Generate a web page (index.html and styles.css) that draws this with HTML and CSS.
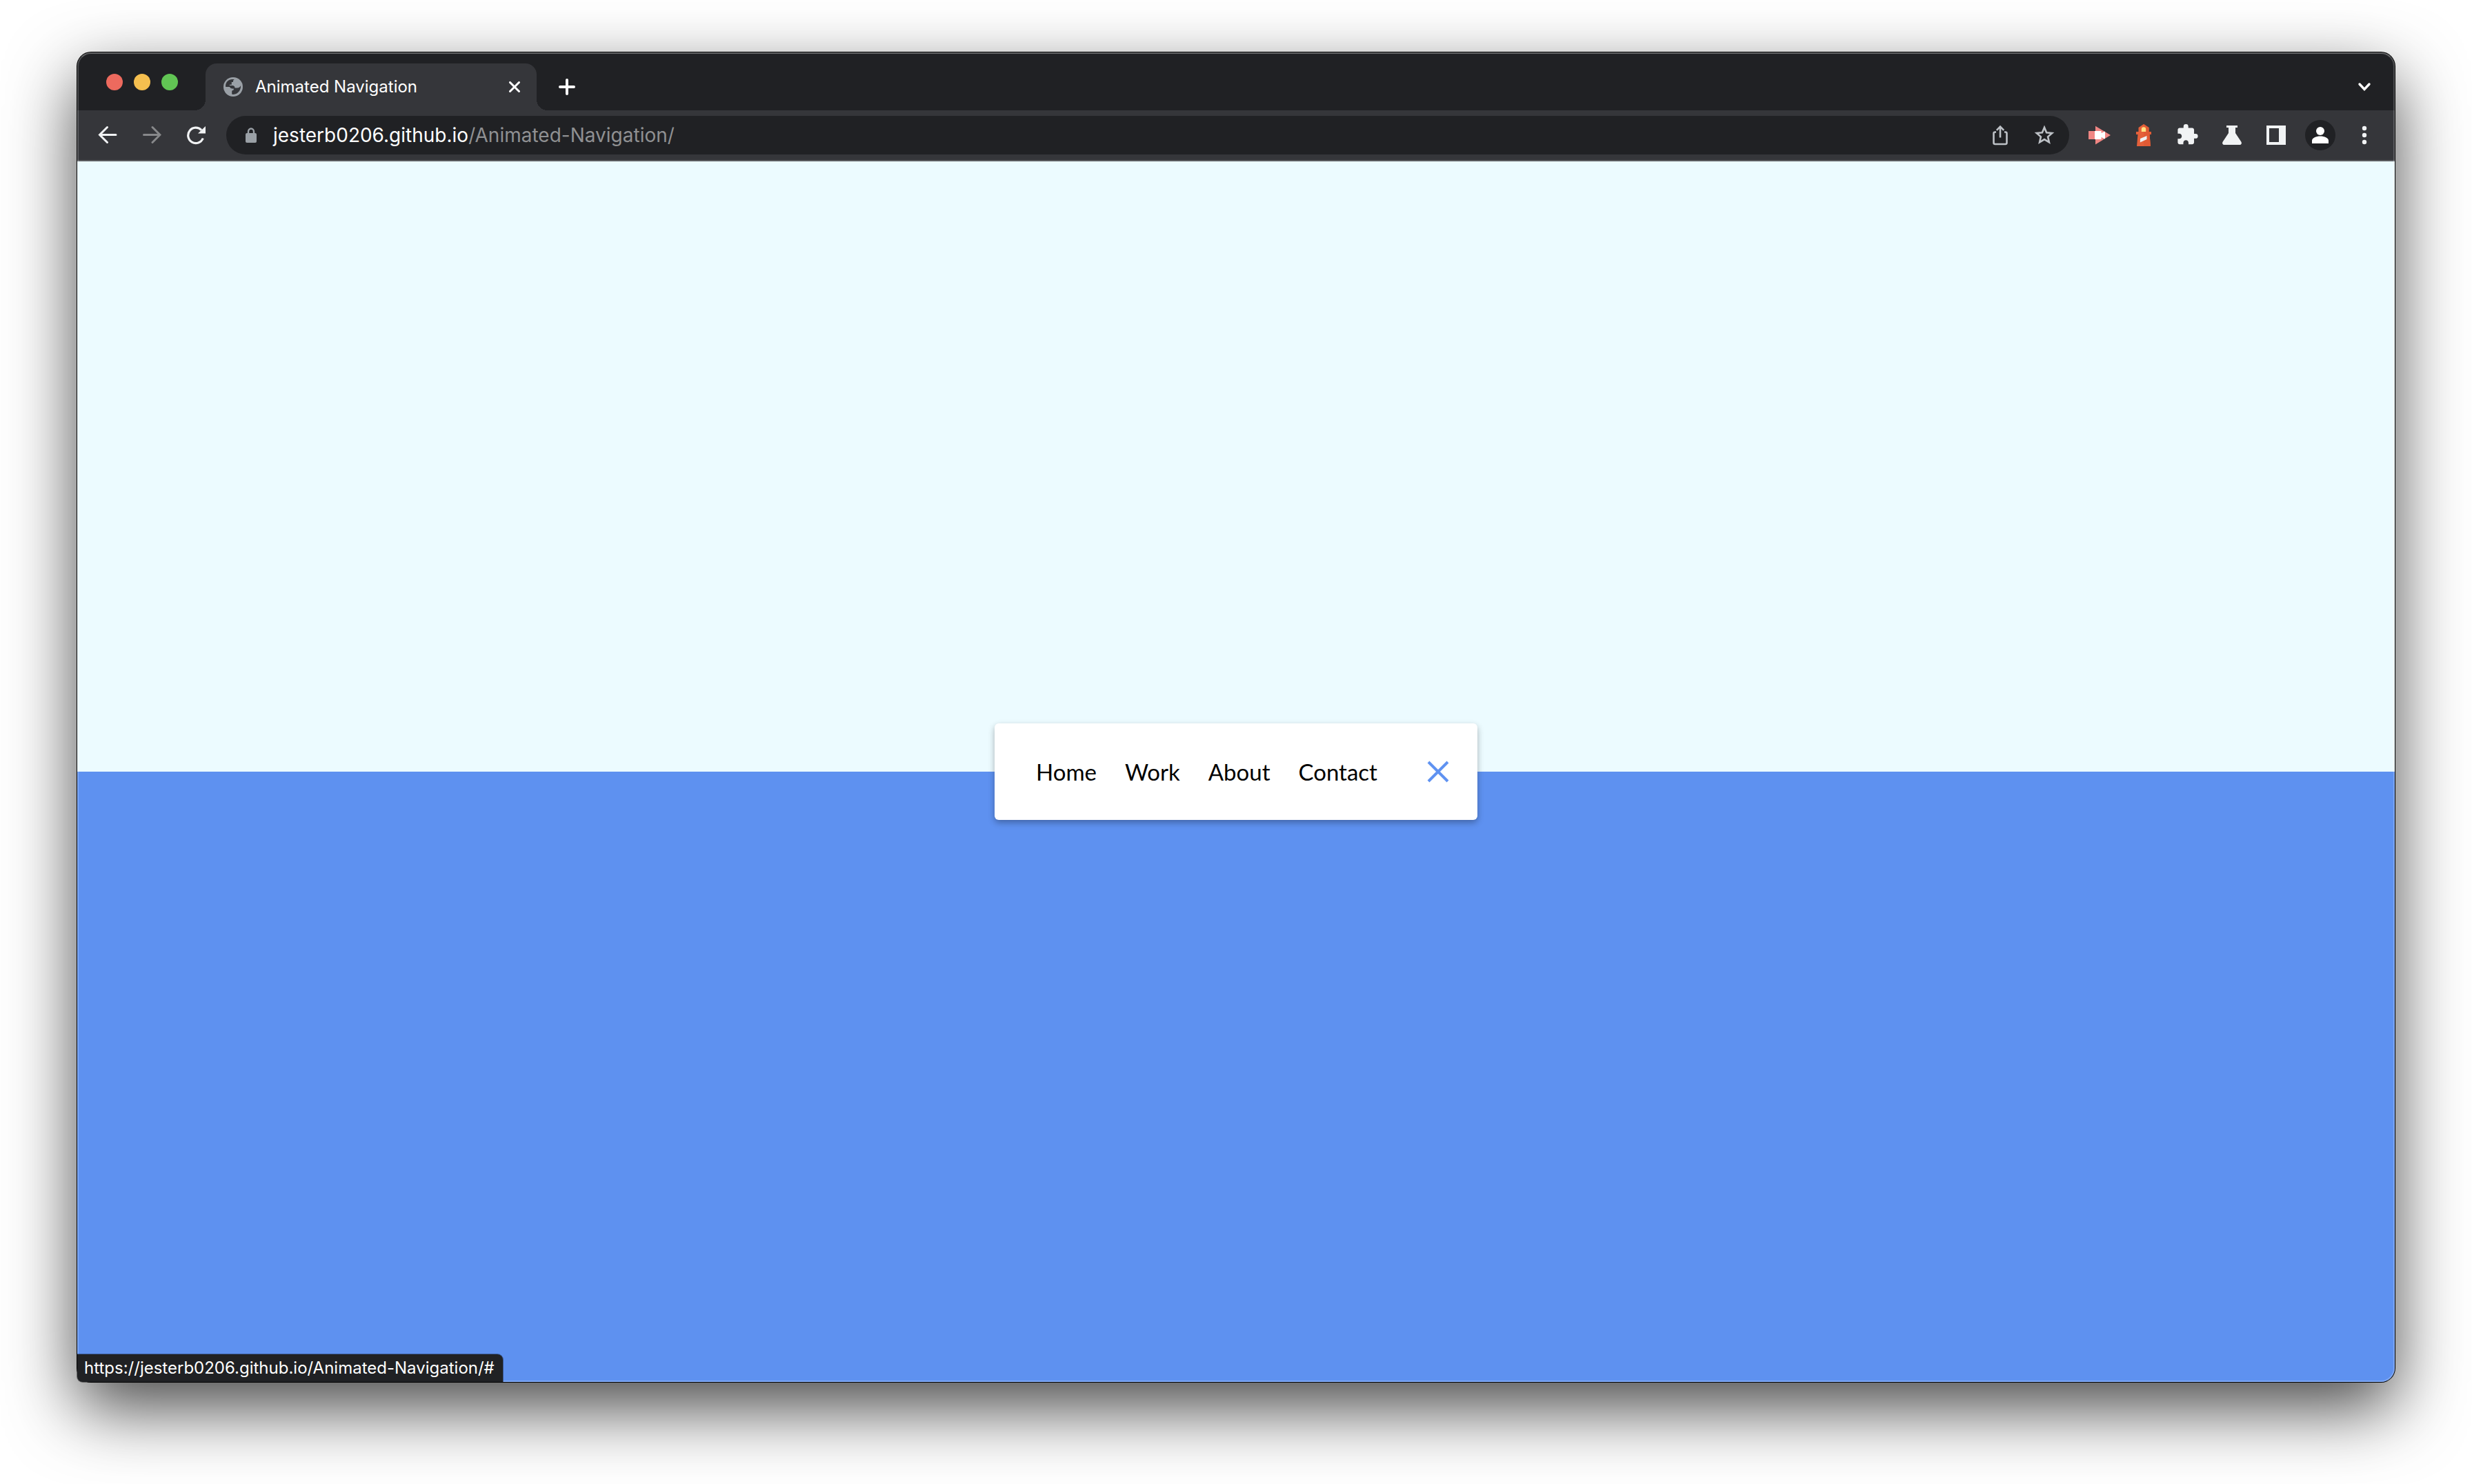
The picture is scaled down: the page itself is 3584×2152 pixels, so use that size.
FILE: index.html
```html
<!DOCTYPE html>
<html lang="en">
<head>
<meta charset="utf-8">
<meta name="viewport" content="width=device-width, initial-scale=1">
<title>Animated Navigation</title>
<link rel="stylesheet" href="styles.css">
</head>
<body>
<div class="window">
  <header class="tabstrip">
    <div class="lights">
      <button class="light light-red" aria-label="Close window"></button>
      <button class="light light-yellow" aria-label="Minimise window"></button>
      <button class="light light-green" aria-label="Zoom window"></button>
    </div>
    <div class="tab">
      <svg class="icon-28" viewBox="0 0 28 28"><circle cx="14" cy="14" r="14" fill="#9aa0a6"/><path d="M16 3.2c-1 .3-2 1-2 2.400v1.500h-2.200v3.700H9.500c-1 0-1 1.200-.2 1.200h3.500c2.500 0 3.700 1.300 3.700 3.400h3.200c2.800 0 4.800-1.500 5.300-3.400.7 5.500-3.500 12.900-11 12.900-.9 0-1.500-.1-1.800-.3V21c0-1.200 1-2.200 2.600-2.400v-2.200h-2.500c-1.700 0-2.700-1-3.200-2.300H3.200c-.8-5.400 2.400-10.100 8.800-11 1.200-.2 2.800-.2 4 .1z" fill="#35363a"/></svg>
      <span class="tab-title">Animated Navigation</span>
      <button class="plain" aria-label="Close tab"><svg class="icon-16" viewBox="0 0 16 16"><path d="M1.500 1.500l13 13M14.500 1.500l-13 13" stroke="#fff" stroke-width="3" stroke-linecap="round"/></svg></button>
    </div>
    <button class="plain new-tab" aria-label="New tab"><svg class="icon-24" viewBox="0 0 24 24"><path d="M12 2v20M2 12h20" stroke="#fff" stroke-width="4" stroke-linecap="round"/></svg></button>
    <button class="plain tool tab-search" aria-label="Search tabs"><svg class="icon-24" viewBox="0 0 24 24"><path d="M5 8l7 7.500L19 8" fill="none" stroke="#fff" stroke-width="3.400" stroke-linecap="round"/></svg></button>
  </header>

  <div class="toolbar">
    <div class="tools">
      <button class="plain tool" aria-label="Back"><svg class="icon-28" viewBox="0 0 28 28"><path d="M26 13.500H3M13.500 2.500l-11 11 11 11" fill="none" stroke="#f1f3f4" stroke-width="3" stroke-linecap="round"/></svg></button>
      <button class="plain tool" aria-label="Forward"><svg class="icon-28" viewBox="0 0 28 28"><path d="M2.500 13.500h23M15 2.500l11 11-11 11" fill="none" stroke="#87888a" stroke-width="3" stroke-linecap="round"/></svg></button>
      <button class="plain tool" aria-label="Reload"><svg class="icon-28" viewBox="0 0 28 28"><path d="M22 6.600A11.200 11.200 0 1 0 24.300 18.500" fill="none" stroke="#f1f3f4" stroke-width="3.200"/><path d="M28 1v10.500H17z" fill="#f1f3f4"/></svg></button>
    </div>
    <div class="omnibox">
      <button class="plain lock" aria-label="Site information"><svg class="icon-24" viewBox="0 0 24 24"><rect x="4" y="9" width="16" height="14" rx="2" fill="#9aa0a6"/><path d="M8 10V7a4 4.500 0 0 1 8 0v3" fill="none" stroke="#9aa0a6" stroke-width="2.400"/></svg></button>
      <div class="address" role="textbox" aria-label="Address">jesterb0206.github.io<span class="path">/Animated-Navigation/</span></div>
      <button class="plain tool" aria-label="Share"><svg class="icon-32" viewBox="0 0 32 32"><path d="M10 11.500H8.500a2 2 0 0 0-2 2V27a2 2 0 0 0 2 2h15a2 2 0 0 0 2-2V13.500a2 2 0 0 0-2-2H22M16 19.500V4M10.800 8.800L16 3.600l5.200 5.200" fill="none" stroke="#bdc1c6" stroke-width="2.600"/></svg></button>
      <button class="plain tool" aria-label="Bookmark"><svg class="icon-32" viewBox="0 0 32 32"><path d="M16 4.800l3.100 7.500 8.100.7-6.100 5.400 1.800 7.900-6.900-4.200-6.900 4.200 1.800-7.900L4.800 13l8.100-.7z" fill="none" stroke="#bdc1c6" stroke-width="2.600"/></svg></button>
    </div>
    <div class="tools">
      <button class="plain tool" aria-label="Screen recorder"><svg class="icon-32" viewBox="0 0 32 32"><path d="M0 10h10v12H0zM10 2.700L32 16 10 29.500z" fill="#f08683"/><path d="M9 10h9.500v3L24 10.500v11L18.500 19v3H9z" fill="#fff"/></svg></button>
      <button class="plain tool" aria-label="Lighthouse"><svg class="icon-32" viewBox="0 0 32 32"><path d="M16 0l7.500 5v6H27v4h-2.500L26 32H6l1.500-17H5v-4h3.500V5z" fill="#e4603a"/><path d="M16 0l7.500 5v6H27v4h-2.500L26 32H16z" fill="#e05a34"/><path d="M12.800 11V7.500a3.200 3.200 0 0 1 6.400 0V11z" fill="#ffe082"/><path d="M11 21l9.500-4v5l-9.700 4.500z" fill="#eef1f2"/></svg></button>
      <button class="plain tool" aria-label="Extensions"><svg class="icon-32" viewBox="1 1 23 23"><path d="M20.500 11H19V7c0-1.100-.9-2-2-2h-4V3.500a2.500 2.500 0 0 0-5 0V5H4c-1.100 0-1.990.9-1.990 2v3.800H3.500c1.490 0 2.700 1.210 2.700 2.700s-1.210 2.700-2.700 2.700H2V20c0 1.100.9 2 2 2h3.800v-1.500c0-1.490 1.210-2.700 2.700-2.700s2.700 1.210 2.700 2.700V22H17c1.100 0 2-.9 2-2v-4h1.500a2.500 2.500 0 0 0 0-5z" fill="#f1f3f4"/></svg></button>
      <button class="plain tool" aria-label="Labs"><svg class="icon-28" viewBox="0 0 28 28"><path d="M6 0h16v3h-3v8l8.300 12.500c1.400 2.200.2 4.500-2.300 4.500H3c-2.500 0-3.700-2.300-2.300-4.500L9 11V3H6z" fill="#f1f3f4"/></svg></button>
      <button class="plain tool" aria-label="Side panel"><svg class="icon-28" viewBox="0 0 28 28"><path d="M0 0h28v28H0zM4 4v20h14V4z" fill="#f1f3f4" fill-rule="evenodd"/></svg></button>
      <button class="plain tool" aria-label="Profile"><svg class="icon-44" viewBox="0 0 44 44"><circle cx="22" cy="22" r="22" fill="#202124"/><circle cx="22" cy="16" r="6" fill="#fff"/><path d="M10 34v-4c0-4 6-6.500 12-6.500S34 26 34 30v4z" fill="#fff"/></svg></button>
      <button class="plain tool" aria-label="Menu"><svg class="icon-28" viewBox="0 0 28 28"><g fill="#f1f3f4"><circle cx="14" cy="4" r="3.200"/><circle cx="14" cy="14" r="3.200"/><circle cx="14" cy="24" r="3.200"/></g></svg></button>
    </div>
  </div>

  <main class="page">
    <nav class="card">
      <ul class="links">
        <li><a href="#">Home</a></li>
        <li><a href="#">Work</a></li>
        <li><a href="#">About</a></li>
        <li><a href="#">Contact</a></li>
      </ul>
      <button class="plain toggle" aria-label="Close menu"><svg class="icon-32" viewBox="0 0 32 32"><path d="M2 2l28 28M30 2L2 30" stroke="#5f92f1" stroke-width="4"/></svg></button>
    </nav>
  </main>
  <div class="status">https://jesterb0206.github.io/Animated-Navigation/#</div>
</div>
</body>
</html>
```
FILE: styles.css
```css
* {
  box-sizing: border-box;
}

body {
  display: flex;
  flex-direction: column;
  min-height: 100vh;
  margin: 0;
  padding: 76px 112px 148px;
  overflow: hidden;
  background: #fff;
  font-family: Inter, "Liberation Sans", sans-serif;
}

svg {
  display: block;
}

.icon-16 { width: 16px; height: 16px; }
.icon-24 { width: 24px; height: 24px; }
.icon-28 { width: 28px; height: 28px; }
.icon-32 { width: 32px; height: 32px; }
.icon-44 { width: 44px; height: 44px; }

.window {
  position: relative;
  display: flex;
  flex: 1;
  flex-direction: column;
  border-radius: 20px;
  background: #202124;
  box-shadow: 0 0 0 1px #000, 0 38px 100px rgba(0, 0, 0, 0.72);
}

/* light rim just inside the window's edge */
.window::after {
  content: "";
  position: absolute;
  inset: 0;
  border: 2px solid rgba(255, 255, 255, 0.2);
  border-top-color: rgba(255, 255, 255, 0.3);
  border-radius: 20px;
  pointer-events: none;
}

.plain {
  display: flex;
  align-items: center;
  justify-content: center;
  padding: 0;
  border: 0;
  background: none;
}

.tool {
  width: 64px;
  height: 56px;
}

.tabstrip {
  display: flex;
  align-items: flex-end;
  height: 84px;
  padding: 0 12px 0 42px;
}

.lights {
  display: flex;
  gap: 16px;
  align-items: center;
  height: 82px;
  margin-right: 40px;
}

.light {
  width: 24px;
  height: 24px;
  padding: 0;
  border: 0;
  border-radius: 50%;
}

.light-red { background: #ed6a5e; }
.light-yellow { background: #f5bf4f; }
.light-green { background: #61c554; }

.tab {
  position: relative;
  display: flex;
  align-items: center;
  width: 480px;
  height: 68px;
  padding: 0 24px 0 26px;
  border-radius: 16px 16px 0 0;
  background: #35363a;
}

.tab::before,
.tab::after {
  content: "";
  position: absolute;
  bottom: 0;
  width: 16px;
  height: 16px;
}

.tab::before {
  right: 100%;
  background: radial-gradient(circle at 0 0, transparent 16px, #35363a 16px);
}

.tab::after {
  left: 100%;
  background: radial-gradient(circle at 100% 0, transparent 16px, #35363a 16px);
}

.tab-title {
  flex: 1;
  padding-left: 18px;
  color: #fff;
  font-size: 24px;
  line-height: 32px;
}

.new-tab {
  height: 68px;
  margin-left: 32px;
}

.tab-search {
  height: 68px;
  margin-left: auto;
}

.toolbar {
  display: flex;
  gap: 12px;
  height: 74px;
  padding: 8px 12px;
  border-bottom: 2px solid #5b5c60;
  background: #35363a;
}

.tools {
  display: flex;
}

.omnibox {
  display: flex;
  flex: 1;
  align-items: center;
  height: 56px;
  padding: 0 4px 0 12px;
  border-radius: 28px;
  background: #202124;
}

.lock {
  width: 48px;
}

.address {
  flex: 1;
  padding-left: 8px;
  color: #fff;
  font-size: 28px;
  line-height: 40px;
}

.path {
  color: #8f9092;
}

.page {
  display: flex;
  flex: 1;
  align-items: center;
  justify-content: center;
  border-radius: 0 0 20px 20px;
  background: linear-gradient(#ecfbff 50%, #5e91f0 50%);
}

.card {
  display: flex;
  align-items: center;
  justify-content: space-between;
  width: 700px;
  height: 140px;
  padding: 0 41px 0 60px;
  border-radius: 6px;
  background: #fff;
  box-shadow: 0 4px 10px rgba(0, 0, 0, 0.3);
}

.links {
  display: flex;
  gap: 41px;
  margin: 0;
  padding: 0;
  list-style: none;
}

.links a {
  color: #000;
  font-family: Lato, "Open Sans", sans-serif;
  font-size: 33px;
  line-height: 40px;
  text-decoration: none;
}

.status {
  position: absolute;
  bottom: 0;
  left: 0;
  z-index: 1;
  padding: 4px 12px 4px 10px;
  border-radius: 0 8px 0 8px;
  background: #202124;
  box-shadow: 0 0 0 1px rgba(0, 0, 0, 0.4);
  color: #fff;
  font-size: 24px;
  line-height: 32px;
}
```
